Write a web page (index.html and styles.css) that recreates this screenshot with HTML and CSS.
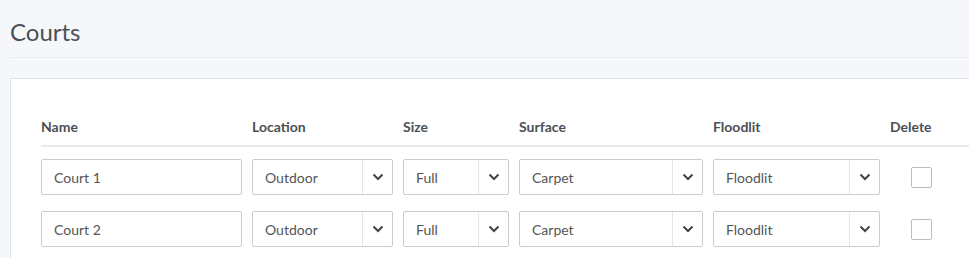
FILE: index.html
```html
<!DOCTYPE html>
<html lang="en">
<head>
    <meta charset="UTF-8">
    <title>Courts</title>
    <link rel="stylesheet" href="styles.css">
</head>
<body>
    <!-- Page heading -->
    <div class="page-header">
        <h1 class="page-title">Courts</h1>
    </div>

    <!-- Courts editor -->
    <div class="card">
        <div class="courts-grid">
            <div class="col-head">Name</div>
            <div class="col-head">Location</div>
            <div class="col-head">Size</div>
            <div class="col-head">Surface</div>
            <div class="col-head">Floodlit</div>
            <div class="col-head">Delete</div>
            <div class="head-rule"></div>

            <input class="field" type="text" value="Court 1">
            <div class="select"><span>Outdoor</span><i class="caret"><svg viewBox="0 0 12 8" width="12" height="8"><polyline points="1.5,1.5 6,6 10.5,1.5"/></svg></i></div>
            <div class="select"><span>Full</span><i class="caret"><svg viewBox="0 0 12 8" width="12" height="8"><polyline points="1.5,1.5 6,6 10.5,1.5"/></svg></i></div>
            <div class="select"><span>Carpet</span><i class="caret"><svg viewBox="0 0 12 8" width="12" height="8"><polyline points="1.5,1.5 6,6 10.5,1.5"/></svg></i></div>
            <div class="select"><span>Floodlit</span><i class="caret"><svg viewBox="0 0 12 8" width="12" height="8"><polyline points="1.5,1.5 6,6 10.5,1.5"/></svg></i></div>
            <div class="check-cell"><span class="checkbox"></span></div>

            <input class="field" type="text" value="Court 2">
            <div class="select"><span>Outdoor</span><i class="caret"><svg viewBox="0 0 12 8" width="12" height="8"><polyline points="1.5,1.5 6,6 10.5,1.5"/></svg></i></div>
            <div class="select"><span>Full</span><i class="caret"><svg viewBox="0 0 12 8" width="12" height="8"><polyline points="1.5,1.5 6,6 10.5,1.5"/></svg></i></div>
            <div class="select"><span>Carpet</span><i class="caret"><svg viewBox="0 0 12 8" width="12" height="8"><polyline points="1.5,1.5 6,6 10.5,1.5"/></svg></i></div>
            <div class="select"><span>Floodlit</span><i class="caret"><svg viewBox="0 0 12 8" width="12" height="8"><polyline points="1.5,1.5 6,6 10.5,1.5"/></svg></i></div>
            <div class="check-cell"><span class="checkbox"></span></div>
        </div>
    </div>
</body>
</html>
```

FILE: styles.css
```css
/* Base */
* {
    margin: 0;
    padding: 0;
    box-sizing: border-box;
}

body {
    font-family: Lato, "Open Sans", sans-serif;
    background-color: #f6f7fa;
    color: #555;
    overflow: hidden;
    padding-left: 10px;
}

/* Heading */
.page-header {
    padding-top: 17px;
    padding-bottom: 11px;
    border-bottom: 1px solid #e8ebef;
    margin-right: -20px;
}

.page-title {
    font-size: 24px;
    font-weight: 400;
    line-height: 29px;
    color: #4b5157;
}

/* Card */
.card {
    margin-top: 20px;
    margin-right: -20px;
    background-color: #fff;
    border: 1px solid #d9e3e9;
    border-bottom: none;
    padding: 38px 0 20px 30px;
    min-height: 180px;
}

.courts-grid {
    display: grid;
    grid-template-columns: 201px 141px 106px 184px 167px 1fr;
    column-gap: 10px;
    row-gap: 16px;
    align-items: center;
}

.col-head {
    font-size: 14px;
    font-weight: 700;
    line-height: 20px;
    color: #4b5055;
    margin-bottom: -10px;
}

.head-rule {
    grid-column: 1 / -1;
    height: 2px;
    background-color: #e6eaed;
    margin-bottom: -6px;
}

/* Inputs */
.field,
.select {
    height: 36px;
    border: 1px solid #cccccc;
    border-radius: 2px;
    background-color: #fff;
    font-family: Lato, "Open Sans", sans-serif;
    font-size: 14px;
    color: #555;
}

.field {
    width: 100%;
    padding: 0 12px;
    outline: none;
}

.select {
    display: flex;
    align-items: center;
}

.select span {
    flex: 1;
    padding-left: 12px;
}

.caret {
    width: 30px;
    height: 100%;
    border-left: 1px solid #e6e6e6;
    display: flex;
    align-items: center;
    justify-content: center;
}

.caret svg {
    fill: none;
    stroke: #444;
    stroke-width: 2;
}

/* Delete checkbox */
.check-cell {
    padding-left: 21px;
    display: flex;
    align-items: center;
}

.checkbox {
    width: 21px;
    height: 21px;
    border: 1px solid #bdbdbd;
    border-radius: 2px;
    background-color: #fff;
}
```
